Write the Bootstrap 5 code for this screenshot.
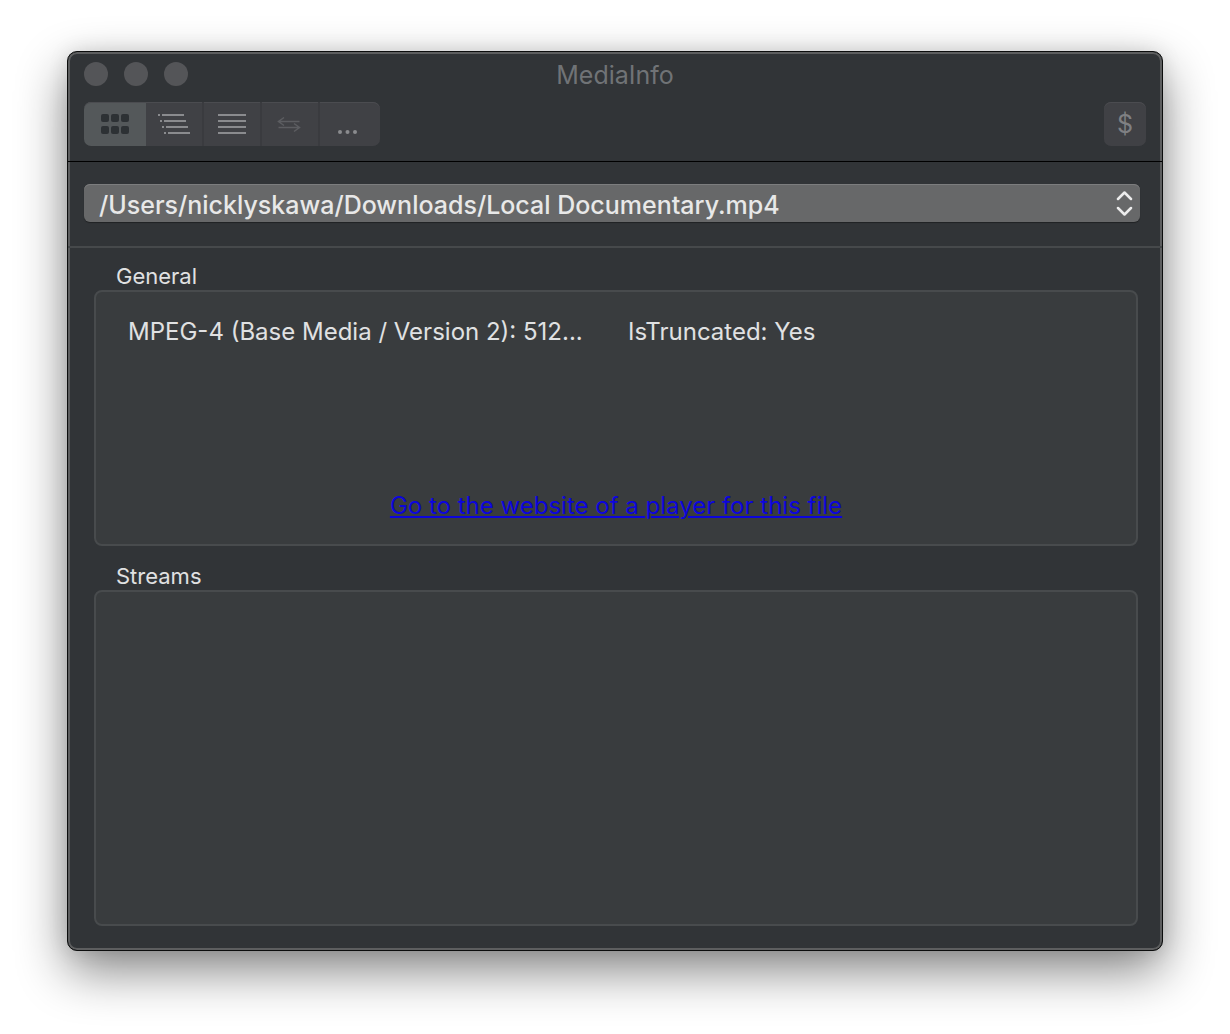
<!DOCTYPE html>
<html lang="en">
<head>
<meta charset="utf-8">
<meta name="viewport" content="width=device-width, initial-scale=1">
<title>MediaInfo</title>
<link href="https://cdn.jsdelivr.net/npm/bootstrap@5.3.0/dist/css/bootstrap.min.css" rel="stylesheet">
<style>
  body { background: #fff; font-family: Inter, Roboto, "Liberation Sans", sans-serif; color: #e0e1e2; padding: 51px 67px 83px; }
  .app-window {
    background: #313437; border: 1px solid #0c0d0d; border-radius: 10px;
    box-shadow: inset 0 0 0 2px #5d5e5f, 0 20px 50px rgba(0,0,0,.48), 0 0 20px rgba(0,0,0,.1);
  }
  .app-head { border-bottom: 1px solid #000; padding: 0 16px 15px; }
  .title-row { display: grid; grid-template-columns: 1fr auto 1fr; height: 44px; margin-bottom: 6px; }
  .title-row h1 { font-size: 25px; line-height: 32px; font-weight: 400; color: #707376; padding-top: 2px; }
  .light { width: 24px; height: 24px; border: 0; padding: 0; border-radius: 50%; background: #545558; }
  .view-group { --bs-border-width: 0px; }
  .tool {
    --bs-btn-bg: #404145; --bs-btn-color: #8a8b8e; --bs-btn-hover-bg: #494a4e; --bs-btn-hover-color: #a0a1a4;
    --bs-btn-active-bg: #54585a; --bs-btn-active-color: #2d3134;
    --bs-btn-border-width: 0; --bs-btn-border-radius: 7px; --bs-btn-padding-x: 0; --bs-btn-padding-y: 0;
    width: 58px; height: 44px; box-shadow: inset 0 1px 0 #4b4c50;
  }
  .view-group > .tool:not(:first-child) { margin-left: 0; }
  .tool-split { border-right: 2px solid #3a3b3f; }
  .tool-wide { width: 62px; }
  .tool-last { width: 60px; }
  .tool-off { --bs-btn-color: #5c5d61; }
  .tool-pay { --bs-btn-padding-y: 2px; --bs-btn-color: #7f8083; width: 42px; font-size: 25px; line-height: 32px; }
  .file-bar { padding: 22px 22px 24px 16px; border-bottom: 2px solid #46494b; }
  .file-pick {
    height: 38px; padding: 3px 44px 0 15px; border: 0; border-radius: 6px; background: #676869; color: #e8e8e8;
    font-size: 25px; line-height: 32px; font-weight: 500; box-shadow: inset 0 1px 0 #7c7d7e, 0 1px 1px rgba(0,0,0,.35);
  }
  .file-pick:focus { box-shadow: inset 0 1px 0 #7c7d7e, 0 0 0 3px #4a7fb5; }
  .pick-arrows { right: 7px; top: 7px; pointer-events: none; }
  .panes { padding: 14px 24px 24px 26px; gap: 16px; }
  .pane-title { font-size: 22px; line-height: 28px; font-weight: 400; padding-left: 22px; }
  .pane-box { background: #393c3e; border: 2px solid #484b4d; border-radius: 8px; }
  .general-box { min-height: 256px; padding: 24px 32px 22px; font-size: 24px; line-height: 32px; }
  .info-grid { display: grid; grid-template-columns: 1fr 1fr; column-gap: 24px; }
  .player-link { color: #0c05dc; text-decoration: underline; text-decoration-thickness: 2px; text-underline-offset: 2px; }
  .player-link:hover { color: #3a30f0; }
</style>
<script src="https://cdn.jsdelivr.net/npm/bootstrap@5.3.0/dist/js/bootstrap.bundle.min.js"></script>
</head>
<body class="d-flex flex-column min-vh-100">
<div class="app-window d-flex flex-column flex-grow-1">
  <header class="app-head">
    <div class="title-row align-items-center">
      <div class="d-flex gap-3">
        <button class="light" type="button" aria-label="Close"></button>
        <button class="light" type="button" aria-label="Minimize"></button>
        <button class="light" type="button" aria-label="Zoom"></button>
      </div>
      <h1 class="m-0">MediaInfo</h1>
    </div>
    <div class="d-flex justify-content-between">
      <div class="btn-group view-group" role="group" aria-label="View">
        <button class="btn tool tool-wide active d-flex align-items-center justify-content-center" type="button" aria-label="Easy view">
          <svg width="28" height="20" viewBox="0 0 28 20" fill="currentColor"><rect width="8" height="8" rx="2"/><rect x="10" width="8" height="8" rx="2"/><rect x="20" width="8" height="8" rx="2"/><rect y="12" width="8" height="8" rx="2"/><rect x="10" y="12" width="8" height="8" rx="2"/><rect x="20" y="12" width="8" height="8" rx="2"/></svg>
        </button>
        <button class="btn tool tool-split d-flex align-items-center justify-content-center" type="button" aria-label="Tree view">
          <svg width="32" height="20" viewBox="0 0 32 20" fill="currentColor"><path d="M0 0h2v2H0zM4 0h22v2H4zM2 6h2v2H2zM6 6h22v2H6zM4 12h2v2H4zM8 12h22v2H8zM6 18h2v2H6zM10 18h22v2H10z"/></svg>
        </button>
        <button class="btn tool tool-split d-flex align-items-center justify-content-center" type="button" aria-label="Text view">
          <svg width="28" height="20" viewBox="0 0 28 20" fill="currentColor"><path d="M0 0h28v2H0zM0 6h28v2H0zM0 12h28v2H0zM0 18h28v2H0z"/></svg>
        </button>
        <button class="btn tool tool-split tool-off d-flex align-items-center justify-content-center" type="button" aria-label="Compare view">
          <svg width="26" height="18" viewBox="0 0 26 18" fill="none" stroke="currentColor" stroke-width="1.5"><path d="M22.500 6.500H1.500M7 2.500L1.500 6.500l5.500 4M1.500 12.500H22M17 8.500l5.500 4-5.500 4"/></svg>
        </button>
        <button class="btn tool tool-last d-flex align-items-center justify-content-center" type="button" aria-label="More views">
          <svg width="24" height="20" viewBox="0 0 24 20" fill="currentColor"><circle cx="2" cy="18" r="2"/><circle cx="9.500" cy="18" r="2"/><circle cx="17" cy="18" r="2"/></svg>
        </button>
      </div>
      <button class="btn tool tool-pay" type="button" aria-label="Donate">$</button>
    </div>
  </header>
  <div class="file-bar">
    <div class="position-relative">
      <select class="form-select file-pick" aria-label="File">
        <option>/Users/nicklyskawa/Downloads/Local Documentary.mp4</option>
      </select>
      <svg class="pick-arrows position-absolute" width="17" height="25" viewBox="0 0 17 25" fill="none" stroke="#ececec" stroke-width="2.500" stroke-linecap="round" stroke-linejoin="round"><path d="M2 8l6.500-6.500L15 8M2 17l6.500 6.500L15 17"/></svg>
    </div>
  </div>
  <main class="panes d-flex flex-column flex-grow-1">
    <section>
      <h2 class="pane-title m-0">General</h2>
      <div class="pane-box general-box d-flex flex-column justify-content-between">
        <div class="info-grid">
          <div>MPEG-4 (Base Media / Version 2): 512...</div>
          <div>IsTruncated: Yes</div>
        </div>
        <div class="text-center"><a class="player-link" href="#">Go to the website of a player for this file</a></div>
      </div>
    </section>
    <section class="d-flex flex-column flex-grow-1">
      <h2 class="pane-title m-0">Streams</h2>
      <div class="pane-box flex-grow-1"></div>
    </section>
  </main>
</div>
</body>
</html>
